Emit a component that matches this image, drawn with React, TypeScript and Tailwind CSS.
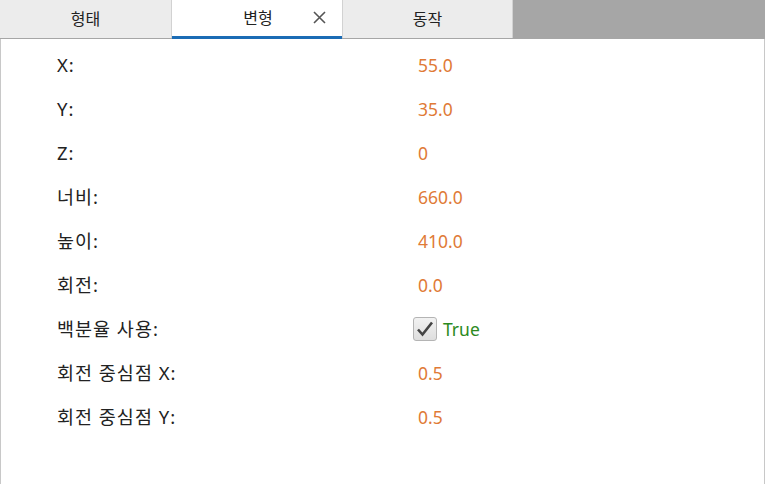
import React from "react";

const rows: { label: string; value: string; check?: boolean }[] = [
  { label: "X:", value: "55.0" },
  { label: "Y:", value: "35.0" },
  { label: "Z:", value: "0" },
  { label: "너비:", value: "660.0" },
  { label: "높이:", value: "410.0" },
  { label: "회전:", value: "0.0" },
  { label: "백분율 사용:", value: "True", check: true },
  { label: "회전 중심점 X:", value: "0.5" },
  { label: "회전 중심점 Y:", value: "0.5" },
];

export default function App() {
  return (
    <div
      className="w-[765px] h-[484px] flex flex-col bg-white overflow-hidden text-[16px] text-[#222]"
      style={{ fontFamily: '"Noto Sans", "Noto Sans CJK KR", sans-serif' }}
    >
      <div className="flex h-[39px] bg-[#a6a6a6] shrink-0">
        <div className="w-[172px] h-[38px] bg-[#ececec] border-r border-[#d2d2d2] flex items-center justify-center">
          형태
        </div>
        <div className="w-[170px] h-[39px] bg-white border-b-[3px] border-[#1b6cb5] flex items-center relative">
          <span className="flex-1 text-center pl-[2px]">변형</span>
          <svg
            className="absolute left-[141px] top-[11px]"
            width="13"
            height="13"
            viewBox="0 0 13 13"
          >
            <path d="M1 1L12 12M12 1L1 12" stroke="#555" strokeWidth="1.6" />
          </svg>
        </div>
        <div className="w-[171px] h-[38px] bg-[#ececec] border-l border-r border-[#d2d2d2] flex items-center justify-center">
          동작
        </div>
      </div>
      <div className="flex-1 border-l border-r border-[#c8c8c8] pt-[4px]">
        {rows.map((r) => (
          <div key={r.label} className="h-[44px] flex items-center">
            <div className="w-[417px] pl-[56px] text-[18.5px] tracking-[1px]">{r.label}</div>
            {r.check ? (
              <div className="flex items-center gap-[6px] -ml-[5px]">
                <div className="w-[24px] h-[24px] rounded-[3px] border border-[#b4b4b4] bg-gradient-to-b from-[#f2f2f2] to-[#dedede] flex items-center justify-center">
                  <svg width="18" height="16" viewBox="0 0 18 16">
                    <path
                      d="M2 8.5L6.5 13.5L16 1.5"
                      stroke="#444"
                      strokeWidth="2.6"
                      fill="none"
                      strokeLinejoin="miter"
                    />
                  </svg>
                </div>
                <span className="text-[#2b8a1e] text-[17.5px]">{r.value}</span>
              </div>
            ) : (
              <div className="text-[#e07a36] text-[17.5px]">{r.value}</div>
            )}
          </div>
        ))}
      </div>
    </div>
  );
}
